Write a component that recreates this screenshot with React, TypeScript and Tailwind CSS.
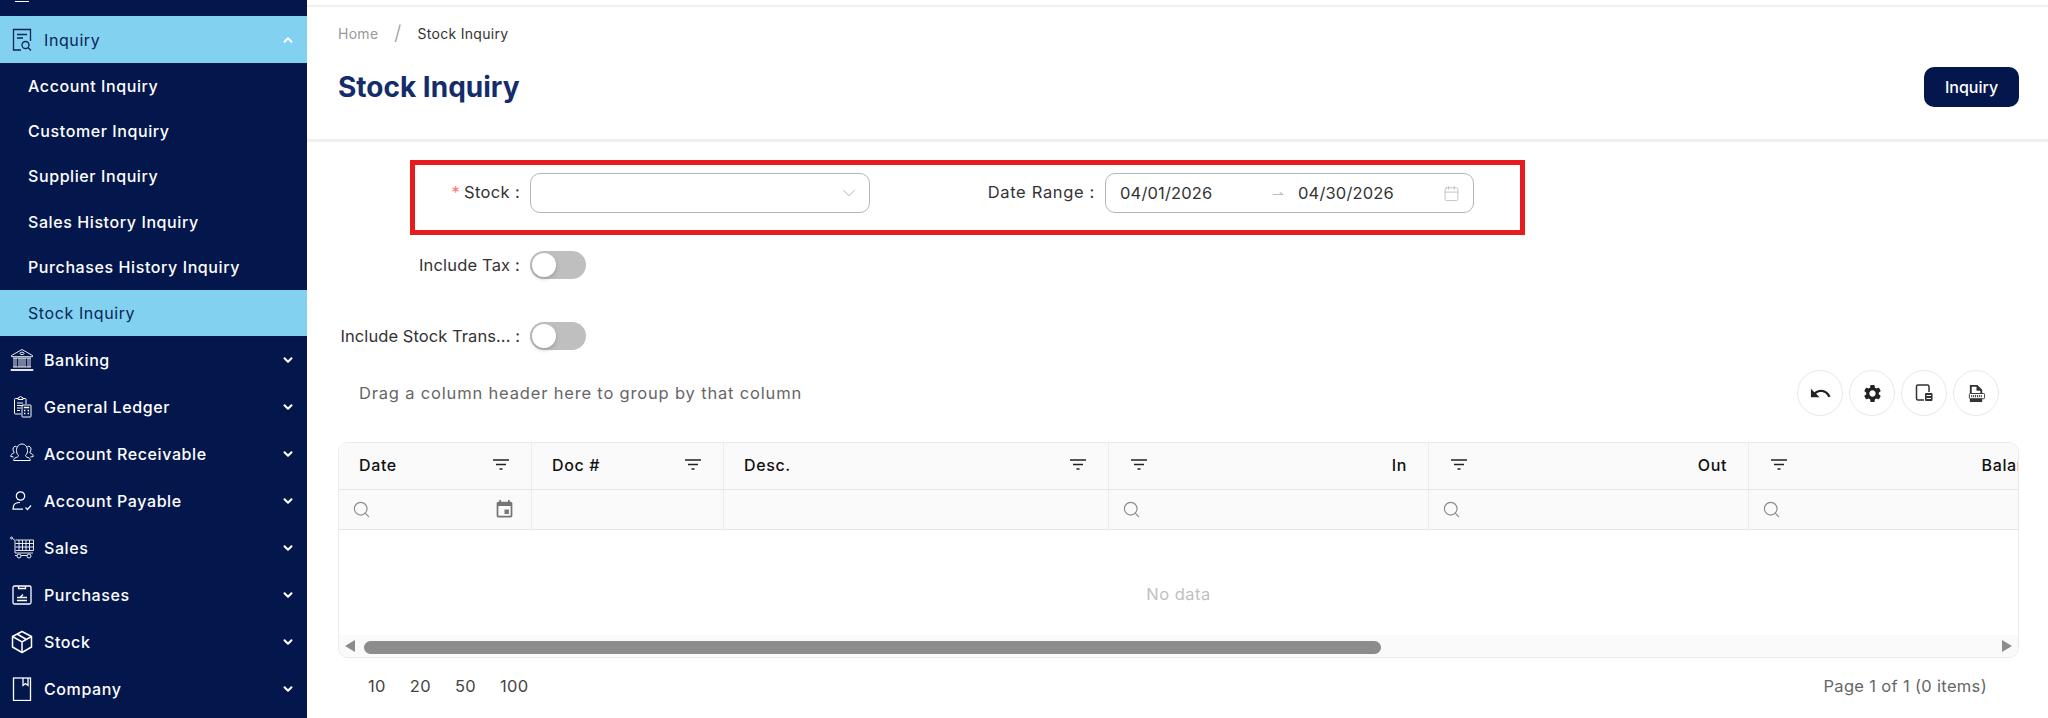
import { ReactNode } from "react";
import { MdEvent, MdUndo, MdSettings } from "react-icons/md";
import { Calendar, ChevronDown, ChevronUp, Search } from "lucide-react";

const subItems = ["Account Inquiry", "Customer Inquiry", "Supplier Inquiry", "Sales History Inquiry", "Purchases History Inquiry"];

function BankIcon() {
  return (
    <svg viewBox="0 0 24 24" className="w-[24px] h-[24px]" fill="none" stroke="currentColor" strokeWidth="0.9">
      <path d="M1.5 7.5 12 1.5l10.5 6v1.2h-21z" />
      <ellipse cx="12" cy="5.4" rx="2" ry="1.2" />
      <path d="M3 10h18M3 19h18M1 21.5h22v1H1z" />
      <path d="M4 10v9M6 10v9M9 10v9M11 10v9M13 10v9M15 10v9M18 10v9M20 10v9" />
    </svg>
  );
}

function LedgerIcon() {
  return (
    <svg viewBox="0 0 24 24" className="w-[24px] h-[24px]" fill="none" stroke="currentColor" strokeWidth="1">
      <path d="M11 19H5.5a1 1 0 0 1-1-1V4.5a1 1 0 0 1 1-1H8M13 3.5h2a1 1 0 0 1 1 1V9" />
      <path d="M8 4.5V2.8h1.2a1.3 1.3 0 0 1 2.6 0H13v1.7z" />
      <path d="M7 8h6M7 10.5h6M7 13h4M7 15.5h3" />
      <rect x="12" y="10" width="9" height="12" rx="0.5" />
      <path d="M13.8 12.5h5.4M14 15.5h1.4M17.6 15.5H19M14 18.5h1.4M17.6 18.5H19" strokeWidth="1.4" />
    </svg>
  );
}

function ReceivableIcon() {
  return (
    <svg viewBox="0 0 24 24" className="w-[24px] h-[24px]" fill="none" stroke="currentColor" strokeWidth="1">
      <path d="M8.5 13.5C7 12 6.5 10.500 6.500 8.500 6.500 5 8.500 2 12 2s5.500 3 5.500 6.500c0 2-.5 3.500-2 5 0 1.500 2 1.800 3.500 2.500 1 .5 1.300 1.300 1.300 2.500H3.700c0-1.200.3-2 1.300-2.500 1.500-.7 3.500-1 3.500-2.500z" />
      <path d="M6.500 4.500C4.500 3.800 3 5 3 7.200c0 1.200.4 2.300 1.200 3 0 1.200-2.400 1.300-3 2.500-.3.600-.4 1.100-.4 1.800l2.700.5" />
      <path d="M17.500 4.500c2-.7 3.500.5 3.500 2.700 0 1.200-.4 2.300-1.200 3 0 1.200 2.400 1.300 3 2.500.3.600.4 1.100.4 1.800l-2.700.5" />
    </svg>
  );
}

function PayableIcon() {
  return (
    <svg viewBox="0 0 24 24" className="w-[24px] h-[24px]" fill="none" stroke="currentColor" strokeWidth="1.200">
      <circle cx="10.500" cy="7" r="4.200" />
      <path d="M10 13.500c-3.500 0-6 1.600-6.500 3.600l-.5 3h10" />
      <path d="m15.500 18.500 2 2 3.500-4" />
    </svg>
  );
}

function CartIcon() {
  return (
    <svg viewBox="0 0 24 24" className="w-[24px] h-[24px]" fill="none" stroke="currentColor" strokeWidth="0.9">
      <circle cx="1.500" cy="2" r="1" />
      <path d="M2.500 2.500 5 4.500v12.500h18" />
      <path d="M5.500 4h18v10.500h-18M5.500 7.500h18M5.500 11h18M9 4v10.500M12.500 4v10.500M16 4v10.500M19.500 4v10.500" />
      <circle cx="9" cy="20" r="2" />
      <circle cx="19" cy="20" r="2" />
      <path d="M5 19.500h2M11 19.500h6" />
    </svg>
  );
}

function PurchaseIcon() {
  return (
    <svg viewBox="0 0 24 24" className="w-[24px] h-[24px]" fill="none" stroke="currentColor" strokeWidth="1.300">
      <rect x="3" y="3" width="18" height="18" rx="1.500" />
      <path d="M8.500 3v2.500h7V3M7 17.500h10M7 14.500h10M13 11.500l-3 3" />
    </svg>
  );
}

function StockIcon() {
  return (
    <svg viewBox="0 0 24 24" className="w-[24px] h-[24px]" fill="none" stroke="currentColor" strokeWidth="1.500">
      <path d="M12 1.500 21.500 6.500v10.500L12 22.500 2.500 17V6.500z" strokeLinejoin="round" />
      <path d="M2.500 6.500 12 12l9.500-5.500M12 12v10.500M7 4l9.500 5.500" />
    </svg>
  );
}

function CompanyIcon() {
  return (
    <svg viewBox="0 0 24 24" className="w-[24px] h-[24px]" fill="none" stroke="currentColor" strokeWidth="1.300">
      <rect x="3.500" y="1" width="17" height="22.500" />
      <path d="M13 1v7.500l2.500-2 2.500 2V1" />
    </svg>
  );
}

function InquiryIcon() {
  return (
    <svg viewBox="0 0 24 24" className="w-[24px] h-[24px]" fill="none" stroke="currentColor" strokeWidth="1.300">
      <path d="M11 22H3.500V1.500h17v11.500" />
      <path d="M7 6.500h10M7 10h6" />
      <circle cx="15.500" cy="17" r="3.500" />
      <path d="m18 19.500 3 3" />
    </svg>
  );
}

function NavRow({ icon, label }: { icon: ReactNode; label: string }) {
  return (
    <div className="h-[47px] flex items-center pl-[10px] pr-[12px] text-white">
      <span className="w-[24px] h-[24px] shrink-0">{icon}</span>
      <span className="ml-[10px] flex-1 text-[16px] font-medium tracking-[0.037em]">{label}</span>
      <ChevronDown size={14} strokeWidth={3.500} />
    </div>
  );
}

function FilterIcon({ className }: { className?: string }) {
  return (
    <svg viewBox="0 0 16 12" className={`w-[16px] h-[12px] shrink-0 ${className ?? ""}`} fill="none" stroke="#222" strokeWidth="1.300">
      <path d="M0 1h16M3 5.500h10M6.500 10h3" />
    </svg>
  );
}

function RoundButton({ children }: { children: ReactNode }) {
  return (
    <button className="w-[46px] h-[46px] rounded-full border border-[#e8e8e8] bg-white flex items-center justify-center text-[#222]">
      {children}
    </button>
  );
}

function Toggle() {
  return (
    <div className="w-[56px] h-[28px] rounded-full bg-[#bfbfbf] p-[2px]">
      <div className="w-[24px] h-[24px] rounded-full bg-white shadow-[0_2px_4px_rgba(0,35,11,0.2)]" />
    </div>
  );
}

function HeaderCell({ label, width, right }: { label: string; width: string; right?: boolean }) {
  return (
    <div className={`${width} shrink-0 h-full border-r border-[#ebebeb] flex items-center justify-between pb-[2px] text-[16px] font-medium tracking-[0.04em] text-[#111] ${right ? "pl-[22px] pr-[21px]" : "pl-[20px] pr-[22px]"}`}>
      {right ? <FilterIcon /> : <span>{label}</span>}
      {right ? <span>{label}</span> : <FilterIcon />}
    </div>
  );
}

function SearchCell({ width, children }: { width: string; children?: ReactNode }) {
  return (
    <div className={`${width} shrink-0 h-full border-r border-[#ebebeb] flex items-center justify-between pl-[13px] pr-[18px] text-[#8c8c8c]`}>
      {children}
    </div>
  );
}

export default function App() {
  return (
    <div className="flex h-[718px] w-full overflow-hidden bg-white font-['Inter','Liberation_Sans',sans-serif] text-[#333]">
      {/* sidebar */}
      <aside className="w-[307px] shrink-0 bg-[#04174d] h-full overflow-hidden">
        <div className="h-[16px] overflow-hidden pl-[15px] text-white">
          <div className="w-[14px] h-[2px] border-b border-white" />
        </div>
        <div className="h-[47px] flex items-center pl-[10px] pr-[12px] bg-[#82d1f1] text-[#0b2557]">
          <span className="w-[24px] h-[24px] shrink-0"><InquiryIcon /></span>
          <span className="ml-[10px] flex-1 text-[16px] font-normal tracking-[0.037em]">Inquiry</span>
          <ChevronUp size={14} strokeWidth={3.500} className="text-white" />
        </div>
        {subItems.map((s) => (
          <div key={s} className="h-[45.400px] flex items-center pl-[28px] text-white text-[16px] font-medium tracking-[0.037em]">
            {s}
          </div>
        ))}
        <div className="h-[46px] flex items-center pl-[28px] bg-[#82d1f1] text-[#0b2557] text-[16px] tracking-[0.037em]">Stock Inquiry</div>
        <div className="h-[1px]" />
        <NavRow icon={<BankIcon />} label="Banking" />
        <NavRow icon={<LedgerIcon />} label="General Ledger" />
        <NavRow icon={<ReceivableIcon />} label="Account Receivable" />
        <NavRow icon={<PayableIcon />} label="Account Payable" />
        <NavRow icon={<CartIcon />} label="Sales" />
        <NavRow icon={<PurchaseIcon />} label="Purchases" />
        <NavRow icon={<StockIcon />} label="Stock" />
        <NavRow icon={<CompanyIcon />} label="Company" />
      </aside>

      {/* main */}
      <main className="flex-1 min-w-0 flex flex-col">
        <div className="mt-[5px] h-[2px] bg-[#f0f0f0]" />
        <header className="h-[135px] border-b-[3px] border-[#f0f0f0] px-[31px] pr-[29px]">
          <div className="h-[52px] flex items-center text-[14px] tracking-[0.02em]">
            <span className="text-[#999]">Home</span>
            <span className="mx-[16px] text-[#999] text-[20px] font-light">/</span>
            <span className="text-[#333]">Stock Inquiry</span>
          </div>
          <div className="flex items-center justify-between h-[56px]">
            <h1 className="text-[28px] font-bold text-[#142c6b]">Stock Inquiry</h1>
            <button className="w-[95px] h-[40px] rounded-[10px] bg-[#04174d] text-white text-[16px] font-medium">Inquiry</button>
          </div>
        </header>

        <section className="px-[31px] pr-[29px] pt-[18px]">
          {/* red highlight around the first form row */}
          <div className="ml-[72px] w-[1115px] h-[75px] border-[5px] border-[#e81c1c] flex items-start pt-[8px]">
            <label className="w-[115px] h-[40px] leading-[38px] pr-[10px] text-right text-[16.500px] tracking-[0.02em] whitespace-nowrap">
              <span className="text-[#ff7875] mr-[4px]">*</span>Stock :
            </label>
            <div className="w-[340px] h-[40px] rounded-[10px] border border-[#b5b5b5] flex items-center justify-end pr-[9px]">
              <ChevronDown size={22} strokeWidth={0.800} className="text-[#999]" />
            </div>
            <label className="w-[235px] h-[40px] leading-[38px] pr-[10px] text-right text-[16.500px] tracking-[0.04em]">Date Range :</label>
            <div className="w-[369px] h-[40px] rounded-[10px] border border-[#b5b5b5] flex items-center pl-[14px] text-[16.500px] tracking-[0.01em]">
              <span className="w-[152px]">04/01/2026</span>
              <span className="w-[26px] text-[#bbb] text-[14px]">⇀</span>
              <span className="w-[145px]">04/30/2026</span>
              <Calendar size={17} strokeWidth={1.300} className="text-[#bfbfbf]" />
            </div>
          </div>

          <div className="mt-[16px] flex items-center h-[28px]">
            <label className="w-[192px] pr-[10px] text-right text-[16.500px] tracking-[0.01em]">Include Tax :</label>
            <Toggle />
          </div>
          <div className="mt-[43px] flex items-center h-[28px]">
            <label className="w-[192px] pr-[10px] text-right text-[16.500px] tracking-[0.004em] whitespace-nowrap">Include Stock Trans... :</label>
            <Toggle />
          </div>

          <div className="mt-[20px] h-[46px] flex items-center pl-[21px] pr-[20px]">
            <span className="flex-1 text-[16.500px] tracking-[0.05em] text-[#666]">Drag a column header here to group by that column</span>
            <div className="flex gap-[6px]">
              <RoundButton><MdUndo size={23} /></RoundButton>
              <RoundButton><MdSettings size={21} /></RoundButton>
              <RoundButton>
                <svg viewBox="0 0 20 20" className="w-[20px] h-[20px]" fill="none" stroke="#333" strokeWidth="1.500">
                  <path d="M10 17H4a1.500 1.500 0 0 1-1.500-1.500v-12A1.500 1.500 0 0 1 4 2h9.500A1.500 1.500 0 0 1 15 3.500V9" />
                  <rect x="11" y="10" width="7.500" height="8" rx="1" fill="#333" stroke="none" />
                  <path d="M12.500 12.500h4.500M12.500 15.500h4.500" stroke="#fff" strokeWidth="1" />
                </svg>
              </RoundButton>
              <RoundButton>
                <svg viewBox="0 0 20 20" className="w-[19px] h-[19px]">
                  <path d="M3 1h8l5 5v4h-2V7H10V3H5v7H3z" fill="#333" />
                  <path d="M3 15h13v4H3z" fill="#333" />
                  <rect x="2.500" y="10" width="16" height="5.500" rx="1" fill="#fff" stroke="#333" strokeWidth="1" />
                  <path d="M4.500 12.700h12" stroke="#333" strokeWidth="2.500" strokeDasharray="1 1" fill="none" />
                </svg>
              </RoundButton>
            </div>
          </div>

          {/* grid */}
          <div className="mt-[26px] h-[216px] rounded-[10px] border border-[#ebebeb] overflow-hidden flex flex-col">
            <div className="h-[47px] shrink-0 flex bg-[#fafafa] border-b border-[#e6e6e6]">
              <HeaderCell label="Date" width="w-[193px]" />
              <HeaderCell label="Doc #" width="w-[192px]" />
              <HeaderCell label="Desc." width="w-[385px]" />
              <HeaderCell label="In" width="w-[320px]" right />
              <HeaderCell label="Out" width="w-[320px]" right />
              <HeaderCell label="Balance" width="w-[320px]" right />
            </div>
            <div className="h-[40px] shrink-0 flex bg-[#fafafa] border-b border-[#e6e6e6]">
              <SearchCell width="w-[193px]">
                <Search size={19} strokeWidth={1.500} />
                <MdEvent size={21} className="text-[#757575] -mr-[2px]" />
              </SearchCell>
              <SearchCell width="w-[192px]" />
              <SearchCell width="w-[385px]" />
              <SearchCell width="w-[320px]"><Search size={19} strokeWidth={1.500} /></SearchCell>
              <SearchCell width="w-[320px]"><Search size={19} strokeWidth={1.500} /></SearchCell>
              <SearchCell width="w-[320px]"><Search size={19} strokeWidth={1.500} /></SearchCell>
            </div>
            <div className="flex-1 flex items-center justify-center pt-[24px] text-[16.500px] tracking-[0.03em] text-[#bfbfbf]">No data</div>
            <div className="h-[22px] shrink-0 bg-[#fafafa] flex items-center pl-[6px] pr-[6px]">
              <span className="w-0 h-0 border-y-[6px] border-y-transparent border-r-[10px] border-r-[#8c8c8c]" />
              <div className="ml-[9px] w-[1017px] h-[13px] mt-[3px] rounded-full bg-[#8c8c8c]" />
              <div className="flex-1" />
              <span className="w-0 h-0 border-y-[6px] border-y-transparent border-l-[10px] border-l-[#8c8c8c]" />
            </div>
          </div>

          <div className="mt-[16px] flex items-center justify-between pl-[30px] pr-[32px] text-[16.500px] tracking-[0.02em]">
            <div className="flex gap-[24px] text-[#444]">
              <span>10</span>
              <span>20</span>
              <span>50</span>
              <span>100</span>
            </div>
            <span className="text-[#666]">Page 1 of 1 (0 items)</span>
          </div>
        </section>
      </main>
    </div>
  );
}
